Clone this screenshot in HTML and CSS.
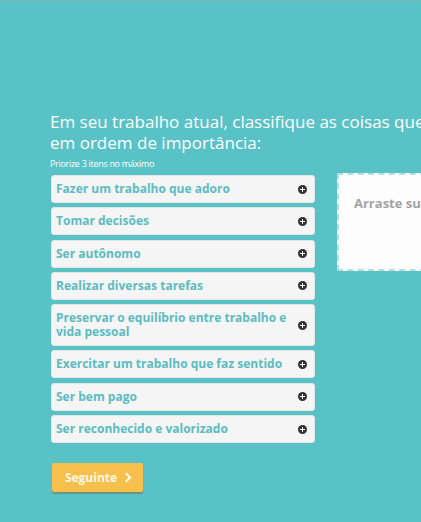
FILE: index.html
```html
<!DOCTYPE html>
<html lang="pt">
<head>
<meta charset="utf-8">
<link rel="stylesheet" href="styles.css">
</head>
<body>
<div class="page">
  <h1 class="title"><span class="line">Em seu trabalho atual, classifique as coisas que mais importam para você</span><span class="line">em ordem de importância:</span></h1>
  <p class="hint">Priorize 3 itens no máximo</p>
  <div class="board">
    <ul class="options">
      <li class="option"><span class="label">Fazer um trabalho que adoro</span><span class="plus"></span></li>
      <li class="option"><span class="label">Tomar decisões</span><span class="plus"></span></li>
      <li class="option"><span class="label">Ser autônomo</span><span class="plus"></span></li>
      <li class="option"><span class="label">Realizar diversas tarefas</span><span class="plus"></span></li>
      <li class="option"><span class="label">Preservar o equilíbrio entre trabalho e vida pessoal</span><span class="plus"></span></li>
      <li class="option"><span class="label">Exercitar um trabalho que faz sentido</span><span class="plus"></span></li>
      <li class="option"><span class="label">Ser bem pago</span><span class="plus"></span></li>
      <li class="option"><span class="label">Ser reconhecido e valorizado</span><span class="plus"></span></li>
    </ul>
    <div class="dropzone"><span class="drop-text">Arraste suas respostas aqui</span></div>
  </div>
  <button class="next">Seguinte <span class="chev"></span></button>
</div>
</body>
</html>
```
FILE: styles.css
```css
html, body {
  margin: 0;
  padding: 0;
}
body {
  background: #59c2c7;
  border-top: 1px solid #78b9b9;
  overflow: hidden;
  width: 421px;
  height: 521px;
  font-family: "Open Sans", "Liberation Sans", sans-serif;
}
.page {
  padding: 110px 0 0 50px;
  width: 600px;
}
.title {
  margin: 0;
  font-size: 17px;
  font-weight: 400;
  line-height: 21px;
  color: #ffffff;
}
.line {
  display: block;
  white-space: nowrap;
}
.hint {
  margin: 4px 0 0 0;
  font-size: 9px;
  letter-spacing: -0.3px;
  line-height: 13px;
  color: #ffffff;
}
.board {
  display: flex;
  align-items: flex-start;
  gap: 22px;
  margin-top: 3px;
}
.options {
  list-style: none;
  margin: 2px 0 0 1px;
  padding: 0;
  width: 264px;
  display: flex;
  flex-direction: column;
  gap: 4.3px;
}
.option {
  display: flex;
  align-items: center;
  justify-content: space-between;
  background: #f5f5f5;
  border: 1px solid #e2e6e6;
  border-radius: 3px;
  padding: 6px 7px 6px 4px;
  min-height: 14px;
}
.label {
  font-size: 12px;
  font-weight: 700;
  line-height: 14px;
  color: #5bbcc2;
  max-width: 236px;
}
.plus {
  position: relative;
  width: 9px;
  height: 9px;
  border-radius: 50%;
  background: #333;
  flex: none;
}
.plus::before, .plus::after {
  content: "";
  position: absolute;
  background: #fff;
}
.plus::before {
  left: 2px; top: 4px; width: 5px; height: 1px;
}
.plus::after {
  left: 4px; top: 2px; width: 1px; height: 5px;
}
.dropzone {
  width: 120px;
  background: #fdfdfd;
  border: 2px dashed #b5dede;
  padding: 16px 0 0 15px;
  box-sizing: border-box;
  height: 98px;
  white-space: nowrap;
}
.drop-text {
  font-size: 13px;
  font-weight: 700;
  color: #a3a3a3;
}
.next {
  margin: 20px 0 0 2px;
  width: 91px;
  height: 29px;
  background: #f7c04c;
  border: none;
  border-radius: 2px;
  box-shadow: 0 2px 1px rgba(120, 100, 40, 0.45);
  color: #fff8e4;
  font-family: "Open Sans", "Liberation Sans", sans-serif;
  font-size: 12px;
  font-weight: 700;
  display: flex;
  align-items: center;
  justify-content: center;
  gap: 8px;
  padding: 0;
}
.chev {
  width: 5px;
  height: 5px;
  border-right: 2px solid #fff8e4;
  border-top: 2px solid #fff8e4;
  transform: rotate(45deg);
  margin-left: -2px;
}
```
